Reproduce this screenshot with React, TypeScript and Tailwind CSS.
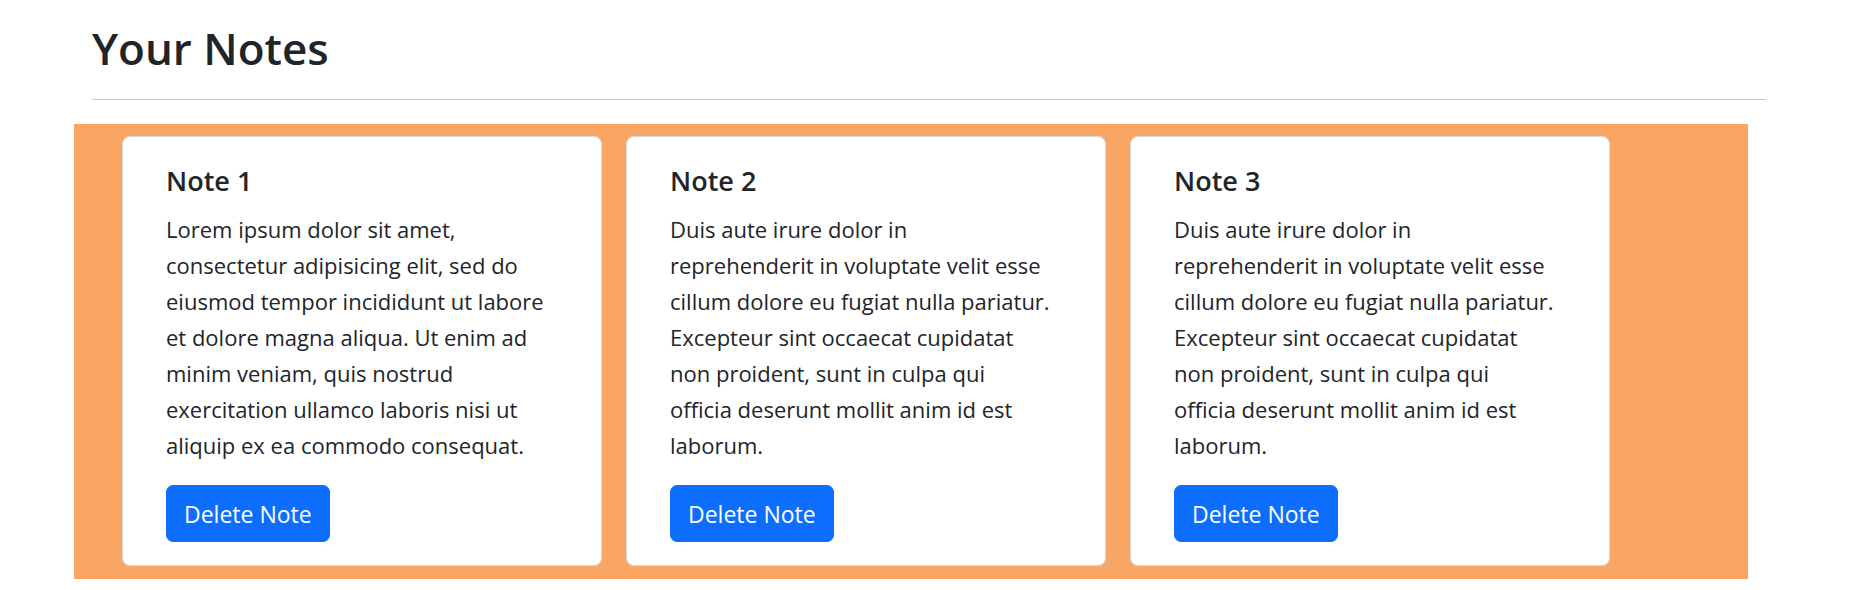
import * as React from "react";

interface Note {
  id: number;
  title: string;
  body: string;
}

// line breaks kept as in the design so every card wraps the same way
const notes: Note[] = [
  {
    id: 1,
    title: "Note 1",
    body: "Lorem ipsum dolor sit amet,\nconsectetur adipisicing elit, sed do\neiusmod tempor incididunt ut labore\net dolore magna aliqua. Ut enim ad\nminim veniam, quis nostrud\nexercitation ullamco laboris nisi ut\naliquip ex ea commodo consequat.",
  },
  {
    id: 2,
    title: "Note 2",
    body: "Duis aute irure dolor in\nreprehenderit in voluptate velit esse\ncillum dolore eu fugiat nulla pariatur.\nExcepteur sint occaecat cupidatat\nnon proident, sunt in culpa qui\nofficia deserunt mollit anim id est\nlaborum.",
  },
  {
    id: 3,
    title: "Note 3",
    body: "Duis aute irure dolor in\nreprehenderit in voluptate velit esse\ncillum dolore eu fugiat nulla pariatur.\nExcepteur sint occaecat cupidatat\nnon proident, sunt in culpa qui\nofficia deserunt mollit anim id est\nlaborum.",
  },
];

function NoteCard({ note, onDelete }: { note: Note; onDelete: (id: number) => void }) {
  return (
    <div className="w-[480px] shrink-0 rounded-[8px] border border-[#d9d9d9] bg-white pt-[26px] pr-[30px] pb-[23px] pl-[43px]">
      <h5 className="mb-[12px] text-[27px] font-semibold leading-[36px]">{note.title}</h5>
      <p className="mb-[22px] whitespace-pre-line text-[22px] leading-[36px]">{note.body}</p>
      <button
        onClick={() => onDelete(note.id)}
        className="h-[57px] rounded-[7px] border border-[#0d6efd] bg-[#0d6efd] px-[17px] text-[23px] leading-[36px] text-white"
      >
        Delete Note
      </button>
    </div>
  );
}

export default function App() {
  const [items, setItems] = React.useState(notes);

  return (
    <div className="min-h-[590px] bg-white text-[#212529] font-['Open_Sans',sans-serif]">
      <div className="mx-auto w-[1674px]">
        {/* Header */}
        <h1 className="pt-[22px] text-[44px] font-semibold leading-[53px]">Your Notes</h1>
        <hr className="mt-[24px] border-0 border-t border-[#c8c9ca]" />

        {/* Notes */}
        <div className="-ml-[18px] mt-[24px] flex w-full gap-[24px] bg-[#f9a665] pt-[12px] pb-[13px] pl-[48px]">
          {items.map((note) => (
            <NoteCard
              key={note.id}
              note={note}
              onDelete={(id) => setItems(items.filter((n) => n.id !== id))}
            />
          ))}
        </div>
      </div>
    </div>
  );
}
